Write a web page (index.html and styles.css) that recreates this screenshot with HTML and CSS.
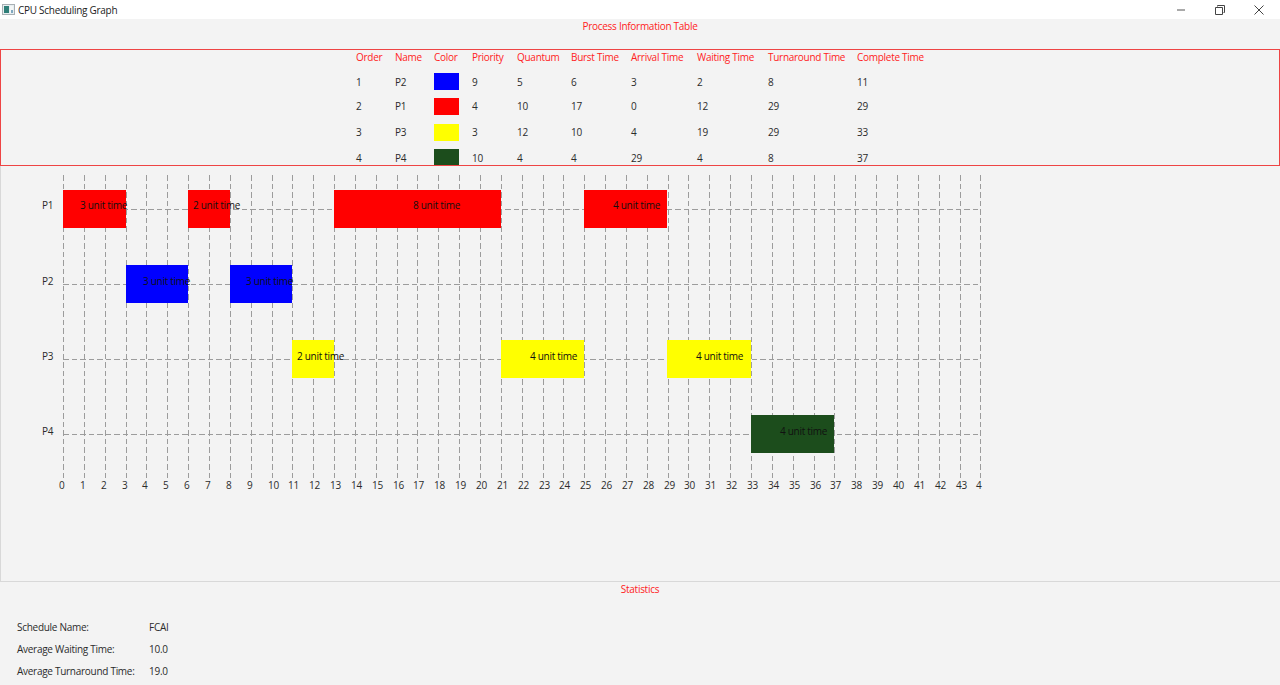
FILE: index.html
```html
<!DOCTYPE html>
<html lang="en">
<head>
<meta charset="utf-8">
<title>CPU Scheduling Graph</title>
<link rel="stylesheet" href="styles.css">
</head>
<body>
<div class="window">
  <header class="titlebar">
    <svg class="appicon" width="13" height="11" viewBox="0 0 13 11"><rect x="0.5" y="0.5" width="12" height="10" fill="#e8eef0" stroke="#a8b0b4"/><rect x="2" y="2" width="5" height="7" fill="#2f7f78"/><rect x="8" y="2" width="3" height="7" fill="#f4f7f7"/><rect x="9" y="6" width="2" height="3" fill="#7fa8c0"/></svg>
    <span class="apptitle">CPU Scheduling Graph</span>
    <div class="controls">
      <button class="ctl" aria-label="Minimize"><svg width="12" height="12" viewBox="0 0 12 12"><path d="M2 6h8" stroke="#555" fill="none"/></svg></button>
      <button class="ctl" aria-label="Restore"><svg width="12" height="12" viewBox="0 0 12 12"><path d="M3.5 2.5V1.5h7v7h-1M1.5 3.5h7v7h-7z" stroke="#444" fill="none"/></svg></button>
      <button class="ctl" aria-label="Close"><svg width="12" height="12" viewBox="0 0 12 12"><path d="M1.5 1.5l9 9M10.5 1.5l-9 9" stroke="#444" fill="none"/></svg></button>
    </div>
  </header>

  <h2 class="section-title title-table">Process Information Table</h2>

  <section class="table-panel">
    <div class="ptable">
      <span class="th">Order</span><span class="th">Name</span><span class="th">Color</span><span class="th">Priority</span><span class="th">Quantum</span><span class="th">Burst Time</span><span class="th">Arrival Time</span><span class="th">Waiting Time</span><span class="th">Turnaround Time</span><span class="th">Complete Time</span>
      <span>1</span><span>P2</span><i class="swatch blue"></i><span>9</span><span>5</span><span>6</span><span>3</span><span>2</span><span>8</span><span>11</span>
      <span>2</span><span>P1</span><i class="swatch red"></i><span>4</span><span>10</span><span>17</span><span>0</span><span>12</span><span>29</span><span>29</span>
      <span>3</span><span>P3</span><i class="swatch yellow"></i><span>3</span><span>12</span><span>10</span><span>4</span><span>19</span><span>29</span><span>33</span>
      <span>4</span><span>P4</span><i class="swatch green"></i><span>10</span><span>4</span><span>4</span><span>29</span><span>4</span><span>8</span><span>37</span>
    </div>
  </section>

  <section class="chart-panel">
    <svg class="chart" width="1279" height="414" viewBox="1 166 1279 414">
      <g class="grid">
        <line x1="63" x2="63" y1="175" y2="480"/><line x1="84" x2="84" y1="175" y2="480"/><line x1="105" x2="105" y1="175" y2="480"/><line x1="126" x2="126" y1="175" y2="480"/><line x1="146" x2="146" y1="175" y2="480"/><line x1="167" x2="167" y1="175" y2="480"/><line x1="188" x2="188" y1="175" y2="480"/><line x1="209" x2="209" y1="175" y2="480"/><line x1="230" x2="230" y1="175" y2="480"/><line x1="251" x2="251" y1="175" y2="480"/><line x1="272" x2="272" y1="175" y2="480"/><line x1="292" x2="292" y1="175" y2="480"/><line x1="313" x2="313" y1="175" y2="480"/><line x1="334" x2="334" y1="175" y2="480"/><line x1="355" x2="355" y1="175" y2="480"/><line x1="376" x2="376" y1="175" y2="480"/><line x1="397" x2="397" y1="175" y2="480"/><line x1="417" x2="417" y1="175" y2="480"/><line x1="438" x2="438" y1="175" y2="480"/><line x1="459" x2="459" y1="175" y2="480"/><line x1="480" x2="480" y1="175" y2="480"/><line x1="501" x2="501" y1="175" y2="480"/><line x1="522" x2="522" y1="175" y2="480"/><line x1="543" x2="543" y1="175" y2="480"/><line x1="563" x2="563" y1="175" y2="480"/><line x1="584" x2="584" y1="175" y2="480"/><line x1="605" x2="605" y1="175" y2="480"/><line x1="626" x2="626" y1="175" y2="480"/><line x1="647" x2="647" y1="175" y2="480"/><line x1="668" x2="668" y1="175" y2="480"/><line x1="688" x2="688" y1="175" y2="480"/><line x1="709" x2="709" y1="175" y2="480"/><line x1="730" x2="730" y1="175" y2="480"/><line x1="751" x2="751" y1="175" y2="480"/><line x1="772" x2="772" y1="175" y2="480"/><line x1="793" x2="793" y1="175" y2="480"/><line x1="814" x2="814" y1="175" y2="480"/><line x1="834" x2="834" y1="175" y2="480"/><line x1="855" x2="855" y1="175" y2="480"/><line x1="876" x2="876" y1="175" y2="480"/><line x1="897" x2="897" y1="175" y2="480"/><line x1="918" x2="918" y1="175" y2="480"/><line x1="939" x2="939" y1="175" y2="480"/><line x1="960" x2="960" y1="175" y2="480"/><line x1="980" x2="980" y1="175" y2="480"/>
        <line x1="63" x2="980" y1="209" y2="209"/><line x1="63" x2="980" y1="284" y2="284"/><line x1="63" x2="980" y1="359" y2="359"/><line x1="63" x2="980" y1="434" y2="434"/>
      </g>
      <g class="bars">
        <rect class="b-red" x="63" y="190" width="63" height="38"/><rect class="b-red" x="188" y="190" width="42" height="38"/><rect class="b-red" x="334" y="190" width="167" height="38"/><rect class="b-red" x="584" y="190" width="83" height="38"/>
        <rect class="b-blue" x="126" y="265" width="62" height="38"/><rect class="b-blue" x="230" y="265" width="62" height="38"/>
        <rect class="b-yellow" x="292" y="340" width="42" height="38"/><rect class="b-yellow" x="501" y="340" width="83" height="38"/><rect class="b-yellow" x="667" y="340" width="84" height="38"/>
        <rect class="b-green" x="751" y="415" width="83" height="38"/>
      </g>
      <g class="bartext">
        <text x="80" y="209">3 unit time</text><text x="193" y="209">2 unit time</text><text x="413" y="209">8 unit time</text><text x="613" y="209">4 unit time</text>
        <text x="143" y="285">3 unit time</text><text x="246" y="285">3 unit time</text>
        <text x="297" y="360">2 unit time</text><text x="530" y="360">4 unit time</text><text x="696" y="360">4 unit time</text>
        <text x="780" y="435">4 unit time</text>
      </g>
      <g class="axis">
        <text x="42" y="209">P1</text><text x="42" y="285">P2</text><text x="42" y="360">P3</text><text x="42" y="435">P4</text>
        <text x="59" y="489">0</text><text x="80" y="489">1</text><text x="101" y="489">2</text><text x="122" y="489">3</text><text x="142" y="489">4</text><text x="163" y="489">5</text><text x="184" y="489">6</text><text x="205" y="489">7</text><text x="226" y="489">8</text><text x="247" y="489">9</text><text x="268" y="489">10</text><text x="288" y="489">11</text><text x="309" y="489">12</text><text x="330" y="489">13</text><text x="351" y="489">14</text><text x="372" y="489">15</text><text x="393" y="489">16</text><text x="413" y="489">17</text><text x="434" y="489">18</text><text x="455" y="489">19</text><text x="476" y="489">20</text><text x="497" y="489">21</text><text x="518" y="489">22</text><text x="539" y="489">23</text><text x="559" y="489">24</text><text x="580" y="489">25</text><text x="601" y="489">26</text><text x="622" y="489">27</text><text x="643" y="489">28</text><text x="664" y="489">29</text><text x="684" y="489">30</text><text x="705" y="489">31</text><text x="726" y="489">32</text><text x="747" y="489">33</text><text x="768" y="489">34</text><text x="789" y="489">35</text><text x="810" y="489">36</text><text x="830" y="489">37</text><text x="851" y="489">38</text><text x="872" y="489">39</text><text x="893" y="489">40</text><text x="914" y="489">41</text><text x="935" y="489">42</text><text x="956" y="489">43</text><text x="976" y="489">4</text>
      </g>
    </svg>
  </section>

  <h2 class="section-title title-stats">Statistics</h2>

  <section class="stats">
    <span>Schedule Name:</span><span>FCAI</span>
    <span>Average Waiting Time:</span><span>10.0</span>
    <span>Average Turnaround Time:</span><span>19.0</span>
  </section>
</div>
</body>
</html>
```
FILE: styles.css
```css
* { box-sizing: border-box; }
html, body { margin: 0; padding: 0; height: 100%; overflow: hidden; }
body {
  font-family: "Open Sans", "Noto Sans", sans-serif;
  font-size: 10px;
  letter-spacing: -0.28px;
  color: #2b2b2b;
  background: #f3f3f3;
}
.window { width: 1280px; height: 685px; display: flex; flex-direction: column; }

.titlebar {
  height: 19px;
  background: #fff;
  display: flex;
  align-items: center;
  padding-left: 2px;
  color: #222;
}
.appicon { margin-right: 3px; }
.controls { margin-left: auto; display: flex; height: 19px; margin-right: 2px; }
.ctl {
  width: 39px;
  border: 0;
  padding: 0;
  background: none;
  display: flex;
  align-items: center;
  justify-content: center;
}

.section-title {
  margin: 0;
  font-size: 10px;
  font-weight: 400;
  color: #f22;
  text-align: center;
}
.title-table { height: 30px; line-height: 15px; }
.title-stats { height: 15px; line-height: 15px; }

.table-panel {
  height: 117px;
  border: 1.5px solid #ee4444;
  overflow: hidden;
  padding-left: 355px;
}
.ptable {
  display: grid;
  grid-template-columns: 39px 39px 38px 45px 54px 60px 66px 71px 89px auto;
  grid-template-rows: 25.5px 24px 25.5px 26px 25px;
  align-items: center;
  justify-content: start;
  margin-top: -6px;
}
.th { color: #f22; }
.swatch { display: block; width: 25px; height: 17px; }
.blue { background: #0000ff; }
.red { background: #ff0000; }
.yellow { background: #ffff00; }
.green { background: #1c4d1c; }

.chart-panel {
  height: 416px;
  border-left: 1px solid #d8d8d8;
  border-bottom: 1px solid #d8d8d8;
  overflow: hidden;
}
.chart { display: block; }
.grid line {
  stroke: #9c9c9c;
  stroke-width: 1;
  stroke-dasharray: 5.5 3;
  shape-rendering: crispEdges;
}
.b-red { fill: #ff0000; }
.b-blue { fill: #0000ff; }
.b-yellow { fill: #ffff00; }
.b-green { fill: #1c4d1c; }
.bartext text { fill: #111; }
.axis text { fill: #2b2b2b; }

.stats {
  display: grid;
  grid-template-columns: 132px auto;
  justify-content: start;
  padding: 18px 0 0 17px;
  grid-template-rows: 23px 22px 22px;
  align-items: center;
}
```
